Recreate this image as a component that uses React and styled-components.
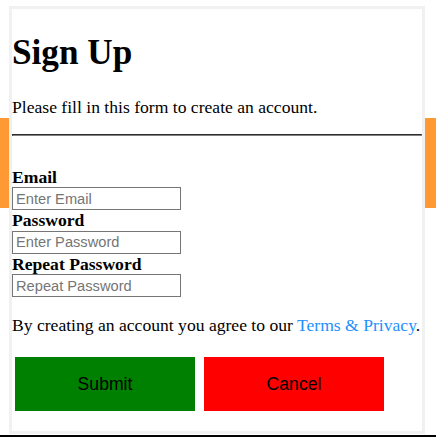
import React from "react";
import styled, { createGlobalStyle } from "styled-components";

const Global = createGlobalStyle`
  html, body { margin: 0; padding: 0; background: #fff; }
  body {
    font-family: "Liberation Serif", "Times New Roman", serif;
    font-size: 17.6px;
    color: #000;
  }
`;

const Page = styled.div`
  width: 436px;
  height: 437px;
  overflow: hidden;
  background: linear-gradient(
    to bottom,
    transparent 118px,
    #ff9933 118px,
    #ff9933 208px,
    transparent 208px
  );
`;

const Frame = styled.div`
  padding: 6px 11px 0 9px;
`;

const Form = styled.form`
  background: #fff;
  border: 3px solid #f1f1f1;
  padding: 0 0 20px 0;
`;

const Title = styled.h1`
  margin: 24px 0 0 0;
  font-size: 35.2px;
  line-height: 40px;
  font-weight: bold;
`;

const Text = styled.p`
  margin: ${(p) => p.$top}px 0 0 0;
  line-height: 20px;
`;

const Divider = styled.hr`
  margin: 17px 0 0 0;
  border: 1px inset gray;
  height: 0;
`;

const Fields = styled.div`
  margin-top: 30.5px;
  display: flex;
  flex-direction: column;
  align-items: flex-start;
`;

const Label = styled.label`
  display: block;
  font-weight: bold;
  line-height: 20.5px;
  height: 20.5px;
`;

const Input = styled.input`
  box-sizing: border-box;
  width: 169px;
  height: 23px;
  margin: 0;
  padding: 1px 3px;
  border: 1px solid #767676;
  font-family: "Liberation Sans", Arial, sans-serif;
  font-size: 14.67px;
  color: #000;
  background: #fff;
  &::placeholder { color: #757575; }
`;

const Link = styled.a`
  color: dodgerblue;
  text-decoration: none;
`;

const Buttons = styled.div`
  margin-top: 22px;
  padding-left: 3px;
  display: flex;
  gap: 9px;
`;

const Button = styled.button`
  width: 180px;
  height: 54px;
  border: none;
  margin: 0;
  padding: 0;
  background: ${(p) => p.$bg};
  color: #000;
  font-family: "Liberation Sans", Arial, sans-serif;
  font-size: 17.6px;
  cursor: pointer;
`;

const Rule = styled.div`
  margin-top: 1px;
  height: 2px;
  background: #000;
`;

export default function App() {
  return (
    <Page>
      <Global />
      <Frame>
        <Form onSubmit={(e) => e.preventDefault()}>
          <Title>Sign Up</Title>
          <Text $top={24}>Please fill in this form to create an account.</Text>
          <Divider />
          <Fields>
            <Label htmlFor="email">Email</Label>
            <Input id="email" type="text" placeholder="Enter Email" />
            <Label htmlFor="psw">Password</Label>
            <Input id="psw" type="password" placeholder="Enter Password" />
            <Label htmlFor="psw-repeat">Repeat Password</Label>
            <Input id="psw-repeat" type="password" placeholder="Repeat Password" />
          </Fields>
          <Text $top={18}>
            By creating an account you agree to our <Link href="#">Terms &amp; Privacy</Link>.
          </Text>
          <Buttons>
            <Button type="submit" $bg="#008000">Submit</Button>
            <Button type="button" $bg="#ff0000">Cancel</Button>
          </Buttons>
        </Form>
      </Frame>
      <Rule />
    </Page>
  );
}
